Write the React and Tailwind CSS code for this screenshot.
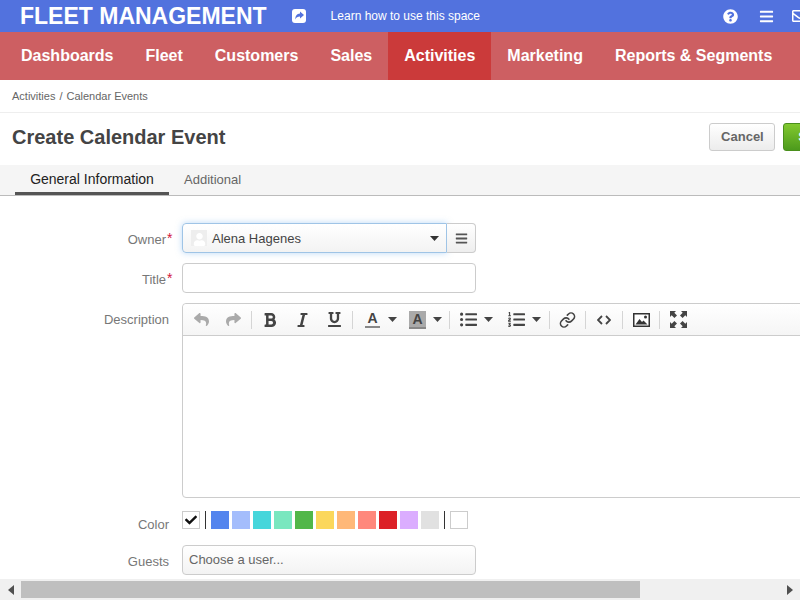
import { FaQuestionCircle, FaBars, FaRegEnvelope, FaReply, FaShare, FaBold, FaItalic, FaUnderline, FaListUl, FaListOl, FaCheck, FaUser } from "react-icons/fa";
import { Link } from "lucide-react";

const navItems = ["Dashboards", "Fleet", "Customers", "Sales", "Activities", "Marketing", "Reports & Segments"];
const colors = ["#5485ee", "#a4bdfc", "#46d6db", "#7ae7bf", "#51b749", "#fbd75b", "#ffb878", "#ff887c", "#dc2127", "#dbadff", "#e1e1e1"];

const Caret = ({ className = "" }) => (
  <svg width="9" height="5" viewBox="0 0 9 5" className={`shrink-0 ${className}`}>
    <path d="M0 0h9L4.5 5z" fill="currentColor" />
  </svg>
);

const Sep = ({ className = "" }) => <span className={`block w-px h-[18px] bg-[#d5d5d5] shrink-0 ${className}`} />;

const ToolBtn = ({ children, className = "" }) => (
  <span className={`flex items-center justify-center shrink-0 ${className}`}>{children}</span>
);

const FormRow = ({ label, required, children, className = "", labelClass = "pt-[7px]" }) => (
  <div className={`flex ${className}`}>
    <div className={`w-[182px] shrink-0 flex justify-end text-[#777] text-[13px] leading-[20px] ${required ? "pr-[16px]" : "pr-[13px]"} ${labelClass}`}>
      <span className="relative">
        {label}
        {required && <span className="absolute left-full top-[-2px] ml-[1px] text-[#d2143a] text-[14px]">*</span>}
      </span>
    </div>
    {children}
  </div>
);

const Toolbar = () => (
  <div className="h-[32px] flex items-center pl-[11px] border-b border-[#ccc] bg-gradient-to-b from-white to-[#f5f5f5] rounded-t-[4px] text-[#444]">
    <ToolBtn className="w-[15px] text-[#aaa]"><FaReply size={15} /></ToolBtn>
    <ToolBtn className="w-[15px] ml-[17px] text-[#aaa]"><FaShare size={15} /></ToolBtn>
    <Sep className="ml-[10px]" />
    <ToolBtn className="w-[12px] ml-[12px]"><FaBold size={16} /></ToolBtn>
    <ToolBtn className="w-[13px] ml-[20px]"><FaItalic size={16} /></ToolBtn>
    <ToolBtn className="w-[13px] ml-[19px]"><FaUnderline size={15} /></ToolBtn>
    <Sep className="ml-[11px]" />
    <ToolBtn className="w-[15px] h-[18px] ml-[12px] flex-col">
      <span className="text-[14px] leading-[15px] font-bold">A</span>
      <span className="w-[15px] h-[2px] bg-[#888]" />
    </ToolBtn>
    <Caret className="ml-[8px]" />
    <ToolBtn className="w-[17px] h-[18px] ml-[12px] flex-col bg-[#aaa]">
      <span className="text-[14px] leading-[16px] font-bold">A</span>
      <span className="w-[17px] h-[2px] bg-[#888]" />
    </ToolBtn>
    <Caret className="ml-[7px]" />
    <Sep className="ml-[7px]" />
    <ToolBtn className="w-[17px] ml-[10px]"><FaListUl size={17} /></ToolBtn>
    <Caret className="ml-[7px]" />
    <ToolBtn className="w-[17px] ml-[15px]"><FaListOl size={17} /></ToolBtn>
    <Caret className="ml-[7px]" />
    <Sep className="ml-[8px]" />
    <ToolBtn className="w-[17px] ml-[9px]"><Link size={18} strokeWidth={2.25} /></ToolBtn>
    <Sep className="ml-[9px]" />
    <ToolBtn className="w-[14px] ml-[11px]">
      <svg width="14" height="10" viewBox="0 0 14 10" fill="none" stroke="currentColor" strokeWidth="1.8">
        <path d="M5 1 1 5l4 4M9 1l4 4-4 4" />
      </svg>
    </ToolBtn>
    <Sep className="ml-[11px]" />
    <ToolBtn className="w-[17px] ml-[10px]">
      <svg width="17" height="14" viewBox="0 0 17 14">
        <rect x="0.75" y="0.75" width="15.5" height="12.5" fill="#fff" stroke="#333" strokeWidth="1.5" />
        <path d="M2.5 11.5 6.5 6l2.5 3 1.5-1.5 4 4z" fill="#333" />
        <circle cx="12.5" cy="4" r="1.5" fill="#333" />
      </svg>
    </ToolBtn>
    <Sep className="ml-[9px]" />
    <ToolBtn className="w-[17px] ml-[10px]">
      <svg width="17" height="17" viewBox="0 0 17 17" fill="currentColor">
        <path d="M0 0h6L4.3 1.7 7 4.4 4.4 7 1.7 4.3 0 6zM17 0v6l-1.7-1.7L12.6 7 10 4.4l2.7-2.7L11 0zM0 17v-6l1.7 1.7L4.4 10 7 12.6l-2.7 2.7L6 17zM17 17h-6l1.7-1.7L10 12.6 12.6 10l2.7 2.7L17 11z" />
      </svg>
    </ToolBtn>
  </div>
);

const App = () => (
  <div className="w-[800px] h-[600px] overflow-hidden flex flex-col bg-white font-['Liberation_Sans',Arial,sans-serif]">
    <div className="flex-1 min-h-0 overflow-hidden">
      <div className="w-[980px]">
        <div className="h-[32px] bg-[#5272de] flex items-center pl-[20px] text-white">
          <span className="text-[23px] leading-[32px] font-bold whitespace-nowrap">FLEET MANAGEMENT</span>
          <svg width="14" height="14" viewBox="0 0 14 14" className="ml-[25px] shrink-0">
            <rect width="14" height="14" rx="3" fill="#fff" />
            <path d="M8 2.6 12 6 8 9.4V7.5C5.6 7.5 4.2 8.3 3.4 10.4 3.2 7 5 4.8 8 4.6z" fill="#5272de" />
          </svg>
          <span className="ml-[25px] text-[12px] whitespace-nowrap">Learn how to use this space</span>
          <FaQuestionCircle size={15} className="ml-[243px] shrink-0" />
          <FaBars size={15} className="ml-[21px] shrink-0" />
          <FaRegEnvelope size={16} className="ml-[18px] shrink-0" />
        </div>
        <nav className="h-[48px] bg-[#cd5f62] flex pl-[5px] text-white text-[16px] font-bold">
          {navItems.map((item) => (
            <a key={item} className={`h-full flex items-center px-[16px] whitespace-nowrap ${item === "Activities" ? "bg-[#cb3a3a]" : ""}`}>
              {item}
            </a>
          ))}
        </nav>
        <div className="h-[33px] border-b border-[#eee] flex items-center pl-[12px] text-[11px] text-[#666]">
          <span>Activities</span>
          <span className="mx-[4px]">/</span>
          <span>Calendar Events</span>
        </div>
        <div className="h-[52px] flex items-center pl-[12px] pb-[4px]">
          <h1 className="text-[20px] font-bold text-[#444] whitespace-nowrap">Create Calendar Event</h1>
          <button className="ml-[484px] w-[66px] h-[28px] border border-[#ccc] rounded-[3px] bg-gradient-to-b from-white to-[#ececec] text-[13px] font-bold text-[#666] shrink-0">Cancel</button>
          <button className="ml-[8px] w-[60px] h-[28px] border border-[#4a8f1c] rounded-[3px] bg-gradient-to-b from-[#82c92f] to-[#4c9a1c] text-[13px] font-bold text-white shrink-0">Save</button>
        </div>
        <div className="h-[31px] bg-[#f5f5f5] border-b border-[#bbb] flex pl-[15px] text-[13px]">
          <span className="h-[30px] w-[154px] border-b-[3px] border-[#555] flex items-center justify-center pt-[2px] text-[14px] text-[#222]">General Information</span>
          <span className="h-[30px] flex items-center ml-[15px] text-[#666]">Additional</span>
        </div>
        <div className="pt-[27px]">
          <FormRow label="Owner" required>
            <div className="w-[294px] h-[30px] flex text-[13px]">
              <div className="w-[265px] h-[30px] border border-[#9fc4e6] rounded-l-[4px] bg-gradient-to-b from-white to-[#f3f3f3] shadow-[0_0_6px_rgba(120,180,240,0.5)] flex items-center pl-[8px] pr-[7px] text-[#444]">
                <span className="w-[16px] h-[16px] bg-[#eee] flex items-end justify-center overflow-hidden text-white"><FaUser size={13} /></span>
                <span className="ml-[5px] pt-[1px]">Alena Hagenes</span>
                <Caret className="ml-auto text-[#333]" />
              </div>
              <div className="w-[29px] h-[30px] border border-l-0 border-[#ccc] rounded-r-[4px] bg-gradient-to-b from-white to-[#eee] flex items-center justify-center text-[#555]">
                <FaBars size={13} />
              </div>
            </div>
          </FormRow>
          <FormRow label="Title" required className="mt-[10px]">
            <div className="w-[294px] h-[30px] border border-[#ccc] rounded-[4px]" />
          </FormRow>
          <FormRow label="Description" className="mt-[10px]">
            <div className="w-[780px] h-[195px] border border-[#ccc] rounded-[4px]">
              <Toolbar />
            </div>
          </FormRow>
          <FormRow label="Color" className="mt-[13px]" labelClass="pt-[4px]">
            <div className="flex items-start h-[20px] gap-[3px]">
              <span className="w-[18px] h-[18px] border border-[#ccc] flex items-center justify-center"><FaCheck size={12} className="text-[#111]" /></span>
              <span className="w-px h-[18px] bg-[#333] mx-[2px]" />
              {colors.map((c) => (
                <span key={c} className="w-[18px] h-[18px]" style={{ backgroundColor: c }} />
              ))}
              <span className="w-px h-[18px] bg-[#333] mx-[2px]" />
              <span className="w-[18px] h-[18px] border border-[#ccc]" />
            </div>
          </FormRow>
          <FormRow label="Guests" className="mt-[10px]">
            <div className="w-[294px] h-[30px] border border-[#ccc] rounded-[4px] bg-gradient-to-b from-white to-[#f3f3f3] flex items-center pl-[6px] text-[13px] text-[#666]">Choose a user...</div>
          </FormRow>
        </div>
      </div>
    </div>
    <div className="h-[21px] shrink-0 bg-[#f0f0f0] flex items-center">
      <span className="w-[21px] flex justify-center text-[#505050]">
        <svg width="6" height="10" viewBox="0 0 6 10"><path d="M6 0v10L0 5z" fill="currentColor" /></svg>
      </span>
      <span className="w-[619px] h-[17px] bg-[#bfbfbf]" />
      <span className="ml-auto w-[21px] flex justify-center text-[#505050]">
        <svg width="6" height="10" viewBox="0 0 6 10"><path d="M0 0v10l6-5z" fill="currentColor" /></svg>
      </span>
    </div>
  </div>
);

export default App;
